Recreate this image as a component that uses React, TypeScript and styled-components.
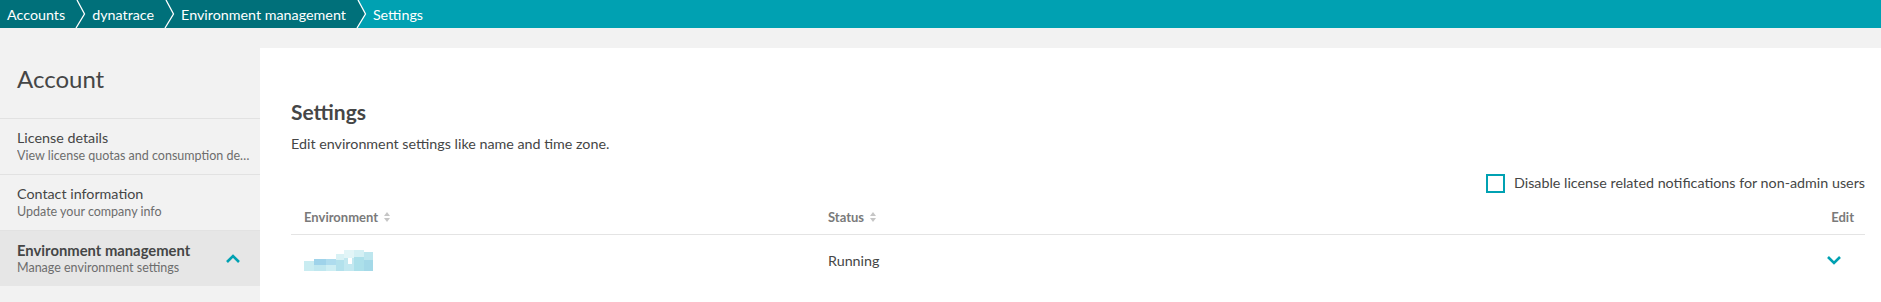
import React from "react";
import styled, { createGlobalStyle } from "styled-components";

const DARK = "#00707a";
const TEAL = "#00a1b2";

const GlobalStyle = createGlobalStyle`
  html, body {
    margin: 0;
    padding: 0;
    background: #f2f2f2;
  }
  body {
    font-family: Lato, "Noto Sans", "Liberation Sans", sans-serif;
    color: #454646;
  }
`;

const Root = styled.div`
  min-height: 100vh;
  display: flex;
  flex-direction: column;
`;

const Breadcrumbs = styled.nav`
  height: 28px;
  display: flex;
  align-items: stretch;
  background: ${TEAL};
`;

const Crumb = styled.a<{ $active?: boolean; $first?: boolean }>`
  display: flex;
  align-items: center;
  padding: 0 10px 0 ${(p) => (p.$first ? "7px" : "6px")};
  background: ${(p) => (p.$active ? TEAL : DARK)};
  color: #ffffff;
  font-size: 14.3px;
  text-decoration: none;
  white-space: nowrap;
`;

const SeparatorSvg = styled.svg`
  display: block;
  flex: none;
`;

function Separator({ left, right }: { left: string; right: string }) {
  return (
    <SeparatorSvg width="11" height="28" viewBox="0 0 11 28">
      <rect x="0" y="0" width="11" height="28" fill={right} />
      <polygon points="0,0 2,0 9.5,14 1,28 0,28" fill={left} />
      <polyline points="2,0 9.5,14 1,28" fill="none" stroke="#ffffff" strokeWidth="1.3" />
    </SeparatorSvg>
  );
}

const Body = styled.div`
  flex: 1;
  display: flex;
`;

const Sidebar = styled.aside`
  width: 260px;
  flex: none;
`;

const SideTitle = styled.h1`
  margin: 0;
  height: 90px;
  box-sizing: border-box;
  padding: 37px 17px 0;
  font-size: 24px;
  line-height: 28px;
  font-weight: 400;
  color: #454646;
`;

const NavItem = styled.div<{ $active?: boolean }>`
  height: 56px;
  box-sizing: border-box;
  border-top: 1px solid #e2e2e2;
  padding: 0 10px 0 17px;
  display: flex;
  align-items: center;
  justify-content: space-between;
  background: ${(p) => (p.$active ? "#e6e6e6" : "transparent")};
`;

const NavText = styled.div`
  display: flex;
  flex-direction: column;
  min-width: 0;
`;

const NavTitle = styled.span<{ $active?: boolean }>`
  font-size: ${(p) => (p.$active ? "14.8px" : "14.3px")};
  line-height: 18px;
  font-weight: ${(p) => (p.$active ? 700 : 400)};
  color: #454646;
`;

const NavSub = styled.span`
  font-size: 12.5px;
  line-height: 18px;
  color: #6d6d6d;
  white-space: nowrap;
  overflow: hidden;
  text-overflow: ellipsis;
  max-width: 233px;
`;

const NavToggle = styled.span`
  display: flex;
  margin-right: 9px;
`;

const Panel = styled.main`
  flex: 1;
  margin-top: 20px;
  background: #ffffff;
  padding: 52px 16px 0 31px;
`;

const Heading = styled.h2`
  margin: 0;
  font-size: 21px;
  line-height: 24px;
  font-weight: 700;
  color: #454646;
`;

const Description = styled.p`
  margin: 10px 0 0;
  font-size: 14.3px;
  line-height: 20px;
  color: #454646;
`;

const CheckRow = styled.label`
  margin-top: 19px;
  display: flex;
  justify-content: flex-end;
  align-items: center;
  gap: 9px;
  font-size: 14.3px;
  line-height: 20px;
  color: #454646;
`;

const CheckBox = styled.span`
  width: 19px;
  height: 19px;
  box-sizing: border-box;
  border: 2px solid ${TEAL};
  background: #ffffff;
`;

const Table = styled.div`
  margin-top: 6px;
  display: grid;
  grid-template-columns: 524px 1fr auto;
`;

const HeadCell = styled.div<{ $right?: boolean }>`
  height: 36px;
  box-sizing: border-box;
  border-bottom: 1px solid #e4e4e4;
  display: flex;
  align-items: center;
  justify-content: ${(p) => (p.$right ? "flex-end" : "flex-start")};
  padding: 0 ${(p) => (p.$right ? "11px" : "0")} 0 13px;
  font-size: 13px;
  font-weight: 700;
  color: #7a7a7a;
  gap: 6px;
`;

const Cell = styled.div<{ $right?: boolean }>`
  height: 50px;
  display: flex;
  align-items: center;
  justify-content: ${(p) => (p.$right ? "flex-end" : "flex-start")};
  padding: 0 ${(p) => (p.$right ? "23px" : "0")} 0 13px;
  font-size: 14.3px;
  color: #454646;
`;

function SortIcon() {
  return (
    <svg width="6" height="10" viewBox="0 0 6 10">
      <polygon points="3,0 6,4 0,4" fill="#c6c6c6" />
      <polygon points="0,6 6,6 3,10" fill="#c6c6c6" />
    </svg>
  );
}

function Chevron({ up }: { up?: boolean }) {
  return (
    <svg width="16" height="10" viewBox="0 0 16 10">
      <polyline
        points={up ? "2,8 8,2 14,8" : "2,2 8,8 14,2"}
        fill="none"
        stroke={TEAL}
        strokeWidth="2.6"
      />
    </svg>
  );
}

const blurBlocks: [number, number, number, number, string][] = [
  [0, 11, 10, 10, "#c9ecf1"],
  [10, 9, 12, 6, "#9fd3ea"],
  [10, 15, 12, 6, "#bfe7ef"],
  [22, 9, 10, 6, "#aedcee"],
  [22, 15, 10, 6, "#cdeef3"],
  [32, 4, 8, 6, "#d9f2f5"],
  [32, 10, 8, 11, "#b3e1ec"],
  [40, 0, 10, 8, "#e2f5f7"],
  [40, 8, 10, 13, "#c2e8f0"],
  [44, 8, 4, 6, "#ffffff"],
  [50, 0, 10, 7, "#d4f0f4"],
  [50, 7, 10, 14, "#ace0ea"],
  [60, 2, 9, 8, "#bde6ee"],
  [60, 10, 9, 11, "#a4d9e8"],
];

function BlurredName() {
  return (
    <svg width="69" height="21" viewBox="0 0 69 21">
      {blurBlocks.map(([x, y, w, h, c], i) => (
        <rect key={i} x={x} y={y} width={w} height={h} fill={c} />
      ))}
    </svg>
  );
}

export default function App() {
  return (
    <Root>
      <GlobalStyle />
      <Breadcrumbs>
        <Crumb $first>Accounts</Crumb>
        <Separator left={DARK} right={DARK} />
        <Crumb>dynatrace</Crumb>
        <Separator left={DARK} right={DARK} />
        <Crumb>Environment management</Crumb>
        <Separator left={DARK} right={TEAL} />
        <Crumb $active>Settings</Crumb>
      </Breadcrumbs>
      <Body>
        <Sidebar>
          <SideTitle>Account</SideTitle>
          <NavItem>
            <NavText>
              <NavTitle>License details</NavTitle>
              <NavSub>View license quotas and consumption details</NavSub>
            </NavText>
          </NavItem>
          <NavItem>
            <NavText>
              <NavTitle>Contact information</NavTitle>
              <NavSub>Update your company info</NavSub>
            </NavText>
          </NavItem>
          <NavItem $active>
            <NavText>
              <NavTitle $active>Environment management</NavTitle>
              <NavSub>Manage environment settings</NavSub>
            </NavText>
            <NavToggle>
              <Chevron up />
            </NavToggle>
          </NavItem>
        </Sidebar>
        <Panel>
          <Heading>Settings</Heading>
          <Description>Edit environment settings like name and time zone.</Description>
          <CheckRow>
            <CheckBox />
            Disable license related notifications for non-admin users
          </CheckRow>
          <Table>
            <HeadCell>
              Environment <SortIcon />
            </HeadCell>
            <HeadCell>
              Status <SortIcon />
            </HeadCell>
            <HeadCell $right>Edit</HeadCell>
            <Cell>
              <BlurredName />
            </Cell>
            <Cell>Running</Cell>
            <Cell $right>
              <Chevron />
            </Cell>
          </Table>
        </Panel>
      </Body>
    </Root>
  );
}
